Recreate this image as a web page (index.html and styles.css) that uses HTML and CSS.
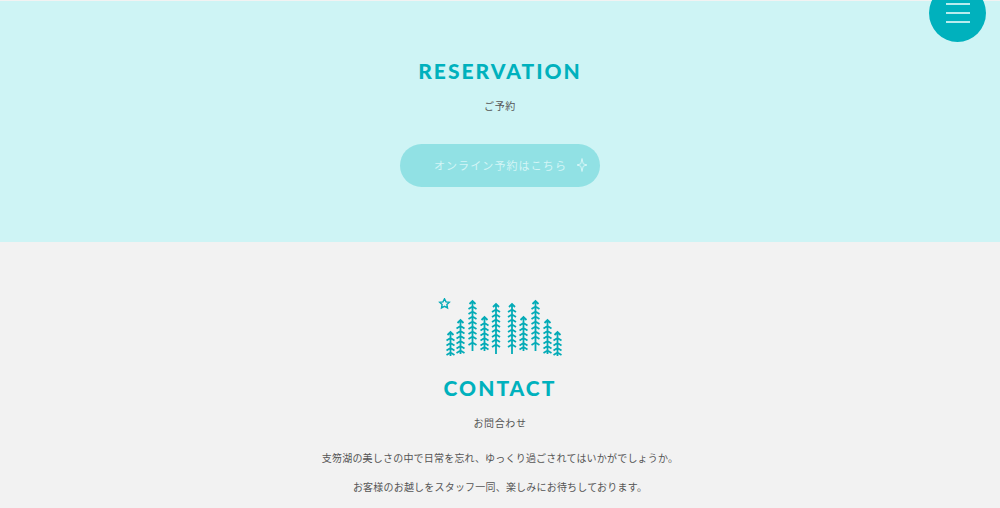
FILE: index.html
```
<!DOCTYPE html>
<html lang="ja">
<head>
    <meta charset="UTF-8">
    <meta name="viewport" content="width=device-width, initial-scale=1.0">
    <title>Reservation / Contact</title>
    <link rel="stylesheet" href="styles.css">
</head>
<body>
    <button class="menu-button" type="button" aria-label="メニュー">
        <span></span>
        <span></span>
        <span></span>
    </button>

    <section class="reservation">
        <h2>RESERVATION</h2>
        <p class="subtitle">ご予約</p>
        <a class="reserve-link" href="#">
            オンライン予約はこちら
            <svg class="spark" viewBox="0 0 12 16" aria-hidden="true">
                <path d="M6 1.500 L7.200 6.800 L11 8 L7.200 9.200 L6 14.500 L4.800 9.200 L1 8 L4.800 6.800 Z"/>
            </svg>
        </a>
    </section>

    <section class="contact">
        <svg class="forest" viewBox="0 0 124 58" aria-hidden="true">
            <defs>
                <path id="tree-xs" d="M0 34V58 M-3 37L0 34L3 37 M-4 42.500L0 40L4 42.500 M-4 47.500L0 45L4 47.500 M-4 52.500L0 50L4 52.500 M-4 57L0 54.500L4 57"/>
                <path id="tree-s" d="M0 22V56 M-3 25L0 22L3 25 M-4 30.500L0 28L4 30.500 M-4 35.500L0 33L4 35.500 M-4 40.500L0 38L4 40.500 M-4 45.500L0 43L4 45.500 M-4 50.500L0 48L4 50.500 M-4 55L0 52.500L4 55"/>
                <path id="tree-m" d="M0 19V53 M-3 22L0 19L3 22 M-4 27.500L0 25L4 27.500 M-4 32.500L0 30L4 32.500 M-4 37.500L0 35L4 37.500 M-4 42.500L0 40L4 42.500 M-4 47.500L0 45L4 47.500 M-4 51.500L0 49L4 51.500"/>
                <path id="tree-l" d="M0 6V56 M-3 9L0 6L3 9 M-4 14L0 11.500L4 14 M-4 19L0 16.500L4 19 M-4 24L0 21.500L4 24 M-4 29L0 26.500L4 29 M-4 34L0 31.500L4 34 M-4 39L0 36.500L4 39 M-4 44L0 41.500L4 44 M-4 49L0 46.500L4 49"/>
                <path id="tree-xl" d="M0 3V53 M-3 6L0 3L3 6 M-4 11L0 8.500L4 11 M-4 16L0 13.500L4 16 M-4 21L0 18.500L4 21 M-4 26L0 23.500L4 26 M-4 31L0 28.500L4 31 M-4 36L0 33.500L4 36 M-4 41L0 38.500L4 41 M-4 47L0 44.500L4 47"/>
            </defs>
            <path class="star" d="M6.500 0.800 L8 3.900 L11.300 4.300 L8.900 6.600 L9.500 9.900 L6.500 8.300 L3.500 9.900 L4.100 6.600 L1.700 4.300 L5 3.900 Z"/>
            <use href="#tree-xs" x="12.500"/>
            <use href="#tree-s" x="22.500"/>
            <use href="#tree-xl" x="34.500"/>
            <use href="#tree-m" x="46.500"/>
            <use href="#tree-l" x="58"/>
            <use href="#tree-l" x="74"/>
            <use href="#tree-m" x="85.500"/>
            <use href="#tree-xl" x="97.500"/>
            <use href="#tree-s" x="109.500"/>
            <use href="#tree-xs" x="119.500"/>
        </svg>
        <h2>CONTACT</h2>
        <p class="subtitle">お問合わせ</p>
        <p class="message">支笏湖の美しさの中で日常を忘れ、ゆっくり過ごされてはいかがでしょうか。</p>
        <p class="message">お客様のお越しをスタッフ一同、楽しみにお待ちしております。</p>
    </section>
</body>
</html>
```
FILE: styles.css
```
* {
    box-sizing: border-box;
}
body {
    margin: 0;
    background-color: #f2f2f2;
    color: #555;
    font-family: "Noto Sans CJK JP", sans-serif;
    font-size: 10px;
    text-align: center;
}
h2 {
    margin: 0;
    color: #00b1bd;
    font-family: Lato, sans-serif;
    font-size: 21px;
    font-weight: 900;
    line-height: 26px;
    letter-spacing: 2px;
}
p {
    margin: 0;
}
.menu-button {
    position: fixed;
    top: -16px;
    right: 14px;
    z-index: 10;
    display: flex;
    flex-direction: column;
    align-items: center;
    justify-content: center;
    gap: 7px;
    width: 57px;
    height: 58px;
    padding: 0;
    border: none;
    border-radius: 50%;
    background-color: #00b1bd;
    cursor: pointer;
}
.menu-button span {
    width: 24px;
    height: 2px;
    background-color: #b9ecee;
}
.reservation {
    display: flex;
    flex-direction: column;
    align-items: center;
    padding: 57px 20px 55px;
    border-top: 1px solid #f2f2f2;
    background-color: #cef4f5;
}
.subtitle {
    margin-top: 12px;
    line-height: 20px;
    letter-spacing: 0.06em;
}
.reserve-link {
    display: flex;
    align-items: center;
    justify-content: flex-end;
    gap: 9px;
    width: 200px;
    height: 43px;
    margin-top: 28px;
    padding: 0 12px 2px 0;
    border-radius: 22px;
    background-color: #91e1e4;
    color: #d3f5f6;
    font-size: 11px;
    letter-spacing: 0.1em;
    text-decoration: none;
    white-space: nowrap;
}
.spark {
    width: 12px;
    height: 16px;
    fill: none;
    stroke: #d3f5f6;
    stroke-width: 1;
}
.contact {
    padding: 56px 20px 0;
}
.forest {
    display: block;
    width: 124px;
    height: 58px;
    margin: 0 auto 19px;
    fill: none;
    stroke: #04abb7;
    stroke-width: 1.8;
}
.forest .star {
    stroke-width: 1.4;
}
.contact .subtitle {
    margin-bottom: 10px;
}
.message {
    line-height: 29px;
    letter-spacing: 0.02em;
}
```
